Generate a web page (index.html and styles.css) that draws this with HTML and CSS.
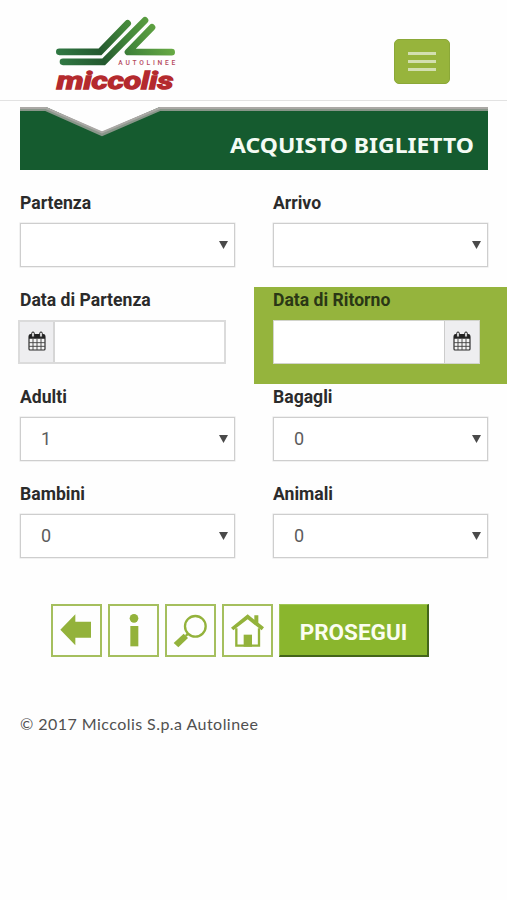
FILE: index.html
```html
<!DOCTYPE html>
<html lang="it">
<head>
<meta charset="utf-8">
<meta name="viewport" content="width=device-width, initial-scale=1">
<title>Miccolis Autolinee</title>
<link rel="stylesheet" href="styles.css">
</head>
<body>
<svg class="sprite" aria-hidden="true">
  <defs>
    <symbol id="calendar" viewBox="0 0 54 60">
      <path d="M3 18Q3 11 9 11H45Q51 11 51 18V54Q51 57 48 57H6Q3 57 3 54Z" fill="#f5f5f5" stroke="#2b2b2b" stroke-width="3.5"/>
      <path d="M3 23V16Q3 10 9 10H45Q51 10 51 16V23Z" fill="#222"/>
      <path d="M3 35H51M3 46H51M15 23V57M27 23V57M39 23V57" stroke="#444" stroke-width="2.8" fill="none"/>
      <rect x="11" y="3" width="8" height="16" rx="4" fill="#eee" stroke="#222" stroke-width="3"/>
      <rect x="35" y="3" width="8" height="16" rx="4" fill="#eee" stroke="#222" stroke-width="3"/>
    </symbol>
  </defs>
</svg>

<header class="header">
  <svg class="logo" viewBox="0 0 450 300" role="img" aria-label="Miccolis Autolinee">
    <defs>
      <linearGradient id="stripe" gradientUnits="userSpaceOnUse" x1="50" y1="180" x2="390" y2="60">
        <stop offset="0" stop-color="#317b45"/>
        <stop offset=".38" stop-color="#24592f"/>
        <stop offset=".62" stop-color="#41853a"/>
        <stop offset="1" stop-color="#6cae45"/>
      </linearGradient>
    </defs>
    <g fill="none" stroke="url(#stripe)" stroke-width="20" stroke-linecap="round">
      <path d="M58 140.500H180L263 55"/>
      <path d="M69 170.500H191L315 46"/>
      <path d="M336 67L264 141L395 141.500" stroke-linejoin="round"/>
    </g>
    <text class="logo-sub" x="235" y="181" textLength="171">AUTOLINEE</text>
    <text class="logo-name" x="50" y="251" textLength="350" lengthAdjust="spacingAndGlyphs">miccolis</text>
  </svg>
  <button class="menu" aria-label="Menu"><span></span><span></span><span></span></button>
</header>

<main>
  <div class="banner">
    <svg class="banner-shape" viewBox="0 0 468 63" role="img" aria-label="Acquisto biglietto">
      <path d="M0 0H26L82 25.500L140 0H468V63H0Z" fill="#155b2f"/>
      <path d="M0 2H25.500L82 27L140 2H468" fill="none" stroke="#89968a" stroke-width="4"/>
      <path d="M0 1H26L82 25.500L140 1H468" fill="none" stroke="#aaa8a5" stroke-width="2"/>
      <text class="banner-title" x="210" y="46" textLength="244" lengthAdjust="spacingAndGlyphs">ACQUISTO BIGLIETTO</text>
    </svg>
  </div>

  <form class="form">
    <div class="field"><label>Partenza</label><div class="select"><span></span><i></i></div></div>
    <div class="field"><label>Arrivo</label><div class="select"><span></span><i></i></div></div>
    <div class="field">
      <label>Data di Partenza</label>
      <div class="date date-left"><span class="addon"><svg><use href="#calendar"/></svg></span><span class="value"></span></div>
    </div>
    <div class="field active">
      <label>Data di Ritorno</label>
      <div class="date"><span class="value"></span><span class="addon"><svg><use href="#calendar"/></svg></span></div>
    </div>
    <div class="field"><label>Adulti</label><div class="select"><span>1</span><i></i></div></div>
    <div class="field"><label>Bagagli</label><div class="select"><span>0</span><i></i></div></div>
    <div class="field"><label>Bambini</label><div class="select"><span>0</span><i></i></div></div>
    <div class="field"><label>Animali</label><div class="select"><span>0</span><i></i></div></div>
  </form>

  <nav class="actions">
    <a class="tile"><svg viewBox="0 0 153 159"><path d="M28 77L73 31V53H120V101H73V124Z"/></svg></a>
    <a class="tile"><svg viewBox="0 0 153 159"><circle cx="78" cy="43" r="13"/><path d="M67 66H91V127H67Z"/></svg></a>
    <a class="tile"><svg viewBox="0 0 153 159"><circle class="line" cx="91" cy="67" r="31"/><path d="M56 89L69 102L40 130L26 117Z"/><path class="line" d="M62 96L70 88"/></svg></a>
    <a class="tile"><svg viewBox="0 0 153 159"><path class="line" d="M43 73V125H111V73"/><path d="M27 71L77 31L97 47V34H109V56L126 70L119 79L77 46L34 79Z"/><path d="M65 92H90V128H65Z"/></svg></a>
    <button class="go" type="button">PROSEGUI</button>
  </nav>
</main>

<footer class="footer">© 2017 Miccolis S.p.a Autolinee</footer>
</body>
</html>
```

FILE: styles.css
```css
* { box-sizing: border-box; }

body {
  margin: 0;
  min-height: 900px;
  background: #fefefe;
  color: #2b2b2b;
  font-family: Roboto, "Liberation Sans", sans-serif;
}

.sprite { display: block; width: 0; height: 0; }

.header {
  display: flex;
  justify-content: space-between;
  align-items: flex-start;
  height: 101px;
  padding: 5px 57px 0 40px;
  border-bottom: 1px solid #e2e2e2;
}

.logo { width: 150px; height: 100px; margin-bottom: -5px; }
.logo-sub { font: 500 20px Roboto, sans-serif; fill: #b5495c; }
.logo-name {
  font: italic 700 70px Roboto, sans-serif;
  fill: #b42a2e;
  stroke: #b42a2e;
  stroke-width: 4;
}

.menu {
  display: flex;
  flex-direction: column;
  justify-content: center;
  align-items: center;
  gap: 5px;
  width: 56px;
  height: 45px;
  margin-top: 34px;
  padding: 0;
  border: 1px solid #8ba838;
  border-radius: 5px;
  background: #97b43c;
}
.menu span { width: 28px; height: 3px; background: #d3dfb0; }

.banner { width: 468px; height: 63px; margin: 6px 0 0 20px; }
.banner-shape { display: block; width: 468px; height: 63px; }
.banner-title { font: 700 21px "Noto Sans", "Open Sans", sans-serif; fill: #f4fbf4; }

.form {
  display: grid;
  grid-template-columns: 254px 253px;
  grid-auto-rows: 97px;
  margin-top: 20px;
}
.field { padding: 0 19px 0 20px; }
.field:nth-child(even) { padding-left: 19px; }
.active { background: #95b43d; }

label {
  display: block;
  height: 33px;
  padding-top: 1px;
  font-weight: 700;
  font-size: 17.6px;
  line-height: 25px;
}
.active label { color: #2a3715; }

.select {
  display: flex;
  justify-content: space-between;
  align-items: center;
  height: 44px;
  padding: 0 6px 0 20px;
  border: 1.500px solid #cecece;
  box-shadow: 0 0 0 .5px #e4e4e4;
  background: #fff;
  color: #5c5c5c;
  font-size: 18px;
}
.select span { margin-bottom: 2px; }
.select i {
  width: 9px;
  height: 8px;
  background: #4a4a4a;
  clip-path: polygon(0 0, 100% 0, 50% 100%);
}

.date { display: flex; width: 207px; height: 44px; border: 1px solid #d2d4cc; }
.date-left { width: 208px; margin-left: -2px; border: 2px solid #dbdbdb; }
.value { flex: 1; background: #fff; }
.addon {
  display: flex;
  align-items: center;
  justify-content: center;
  width: 35px;
  background: #eeeef0;
  border-left: 1px solid #ccc;
}
.addon svg { width: 18px; height: 20px; margin-bottom: 2px; }
.date-left .addon { border-left: 0; border-right: 2px solid #d6d6d6; }

.actions { display: flex; gap: 6px; margin: 26px 0 0 51px; }
.tile { width: 51px; height: 53px; border: 2px solid #a5bf5e; }
.tile svg { display: block; width: 51px; height: 53px; margin: -2px; fill: #93b23b; }
.tile .line { fill: none; stroke: #93b23b; stroke-width: 7; }
.go {
  width: 150px;
  height: 53px;
  padding: 4px 0 0;
  border: solid;
  border-width: 1px 2px 2px 1px;
  border-color: #9fc653 #43651a #43651a #9fc653;
  background: #8ab62d;
  color: #fbfdf0;
  font: 700 22.5px Roboto, sans-serif;
}

.footer {
  margin: 57px 0 0 20px;
  color: #505050;
  font: 400 16px/20px Lato, sans-serif;
  letter-spacing: .45px;
}
```
